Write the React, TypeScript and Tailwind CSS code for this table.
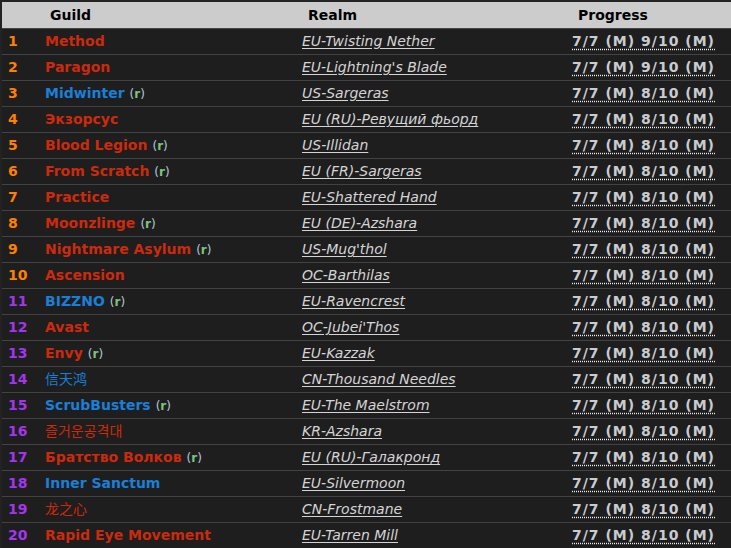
const guilds = [
  { name: "Method", side: "h", recruit: false, realm: "EU-Twisting Nether", prog: "7/7 (M) 9/10 (M)" },
  { name: "Paragon", side: "h", recruit: false, realm: "EU-Lightning's Blade", prog: "7/7 (M) 9/10 (M)" },
  { name: "Midwinter", side: "a", recruit: true, realm: "US-Sargeras", prog: "7/7 (M) 8/10 (M)" },
  { name: "Экзорсус", side: "h", recruit: false, realm: "EU (RU)-Ревущий фьорд", prog: "7/7 (M) 8/10 (M)" },
  { name: "Blood Legion", side: "h", recruit: true, realm: "US-Illidan", prog: "7/7 (M) 8/10 (M)" },
  { name: "From Scratch", side: "h", recruit: true, realm: "EU (FR)-Sargeras", prog: "7/7 (M) 8/10 (M)" },
  { name: "Practice", side: "h", recruit: false, realm: "EU-Shattered Hand", prog: "7/7 (M) 8/10 (M)" },
  { name: "Moonzlinge", side: "h", recruit: true, realm: "EU (DE)-Azshara", prog: "7/7 (M) 8/10 (M)" },
  { name: "Nightmare Asylum", side: "h", recruit: true, realm: "US-Mug'thol", prog: "7/7 (M) 8/10 (M)" },
  { name: "Ascension", side: "h", recruit: false, realm: "OC-Barthilas", prog: "7/7 (M) 8/10 (M)" },
  { name: "BIZZNO", side: "a", recruit: true, realm: "EU-Ravencrest", prog: "7/7 (M) 8/10 (M)" },
  { name: "Avast", side: "h", recruit: false, realm: "OC-Jubei'Thos", prog: "7/7 (M) 8/10 (M)" },
  { name: "Envy", side: "h", recruit: true, realm: "EU-Kazzak", prog: "7/7 (M) 8/10 (M)" },
  { name: "信天鸿", side: "a", recruit: false, realm: "CN-Thousand Needles", prog: "7/7 (M) 8/10 (M)", cjk: true },
  { name: "ScrubBusters", side: "a", recruit: true, realm: "EU-The Maelstrom", prog: "7/7 (M) 8/10 (M)" },
  { name: "즐거운공격대", side: "h", recruit: false, realm: "KR-Azshara", prog: "7/7 (M) 8/10 (M)", cjk: true },
  { name: "Братство Волков", side: "h", recruit: true, realm: "EU (RU)-Галакронд", prog: "7/7 (M) 8/10 (M)" },
  { name: "Inner Sanctum", side: "a", recruit: false, realm: "EU-Silvermoon", prog: "7/7 (M) 8/10 (M)" },
  { name: "龙之心", side: "h", recruit: false, realm: "CN-Frostmane", prog: "7/7 (M) 8/10 (M)", cjk: true },
  { name: "Rapid Eye Movement", side: "h", recruit: false, realm: "EU-Tarren Mill", prog: "7/7 (M) 8/10 (M)" },
];

export default function App() {
  return (
    <div
      className="w-[731px] h-[548px] overflow-hidden bg-[#232323] pt-[2px] pl-[2px] text-[14px]"
      style={{ fontFamily: '"DejaVu Sans", "Noto Sans CJK SC", "Noto Sans CJK KR", sans-serif' }}
    >
      <div className="w-[740px]">
        {/* header */}
        <div className="flex h-[26px] items-center bg-[#cccccc] font-bold text-black">
          <div className="w-[38px]" />
          <div className="w-[257px] pl-[10px]">Guild</div>
          <div className="w-[270px] pl-[11px]">Realm</div>
          <div className="flex-1 pl-[11px]">Progress</div>
        </div>

        {guilds.map((g, i) => (
          <div
            key={g.name}
            className="flex h-[26px] items-center bg-[#1e1e1e] border-t border-[#424242] first:border-t-0"
          >
            <div
              className={
                "w-[38px] pl-[6px] font-bold " +
                (i < 10 ? "text-[#ff8000]" : "text-[#a335ee]")
              }
            >
              {i + 1}
            </div>
            <div className="w-[257px] pl-[5px] whitespace-nowrap">
              <span
                className={
                  (g.cjk ? "font-normal " : "font-bold ") +
                  (g.side === "a" ? "text-[#1a7fd8]" : "text-[#cc2a0c]")
                }
              >
                {g.name}
              </span>
              {g.recruit && (
                <span className="ml-[5px] text-[12px] text-[#b4c8dc]">
                  (<span className="font-bold text-[#7cc47a]">r</span>)
                </span>
              )}
            </div>
            <div className="w-[270px] pl-[5px] whitespace-nowrap">
              <span className="italic text-[#d4d4d4] underline underline-offset-[2px]">{g.realm}</span>
            </div>
            <div className="flex-1 pl-[5px] whitespace-nowrap">
              <span className="font-bold tracking-[1px] text-[#c8ccd0] underline decoration-dotted decoration-[#eeeeee] underline-offset-[3px]">
                {g.prog}
              </span>
            </div>
          </div>
        ))}
      </div>
    </div>
  );
}
